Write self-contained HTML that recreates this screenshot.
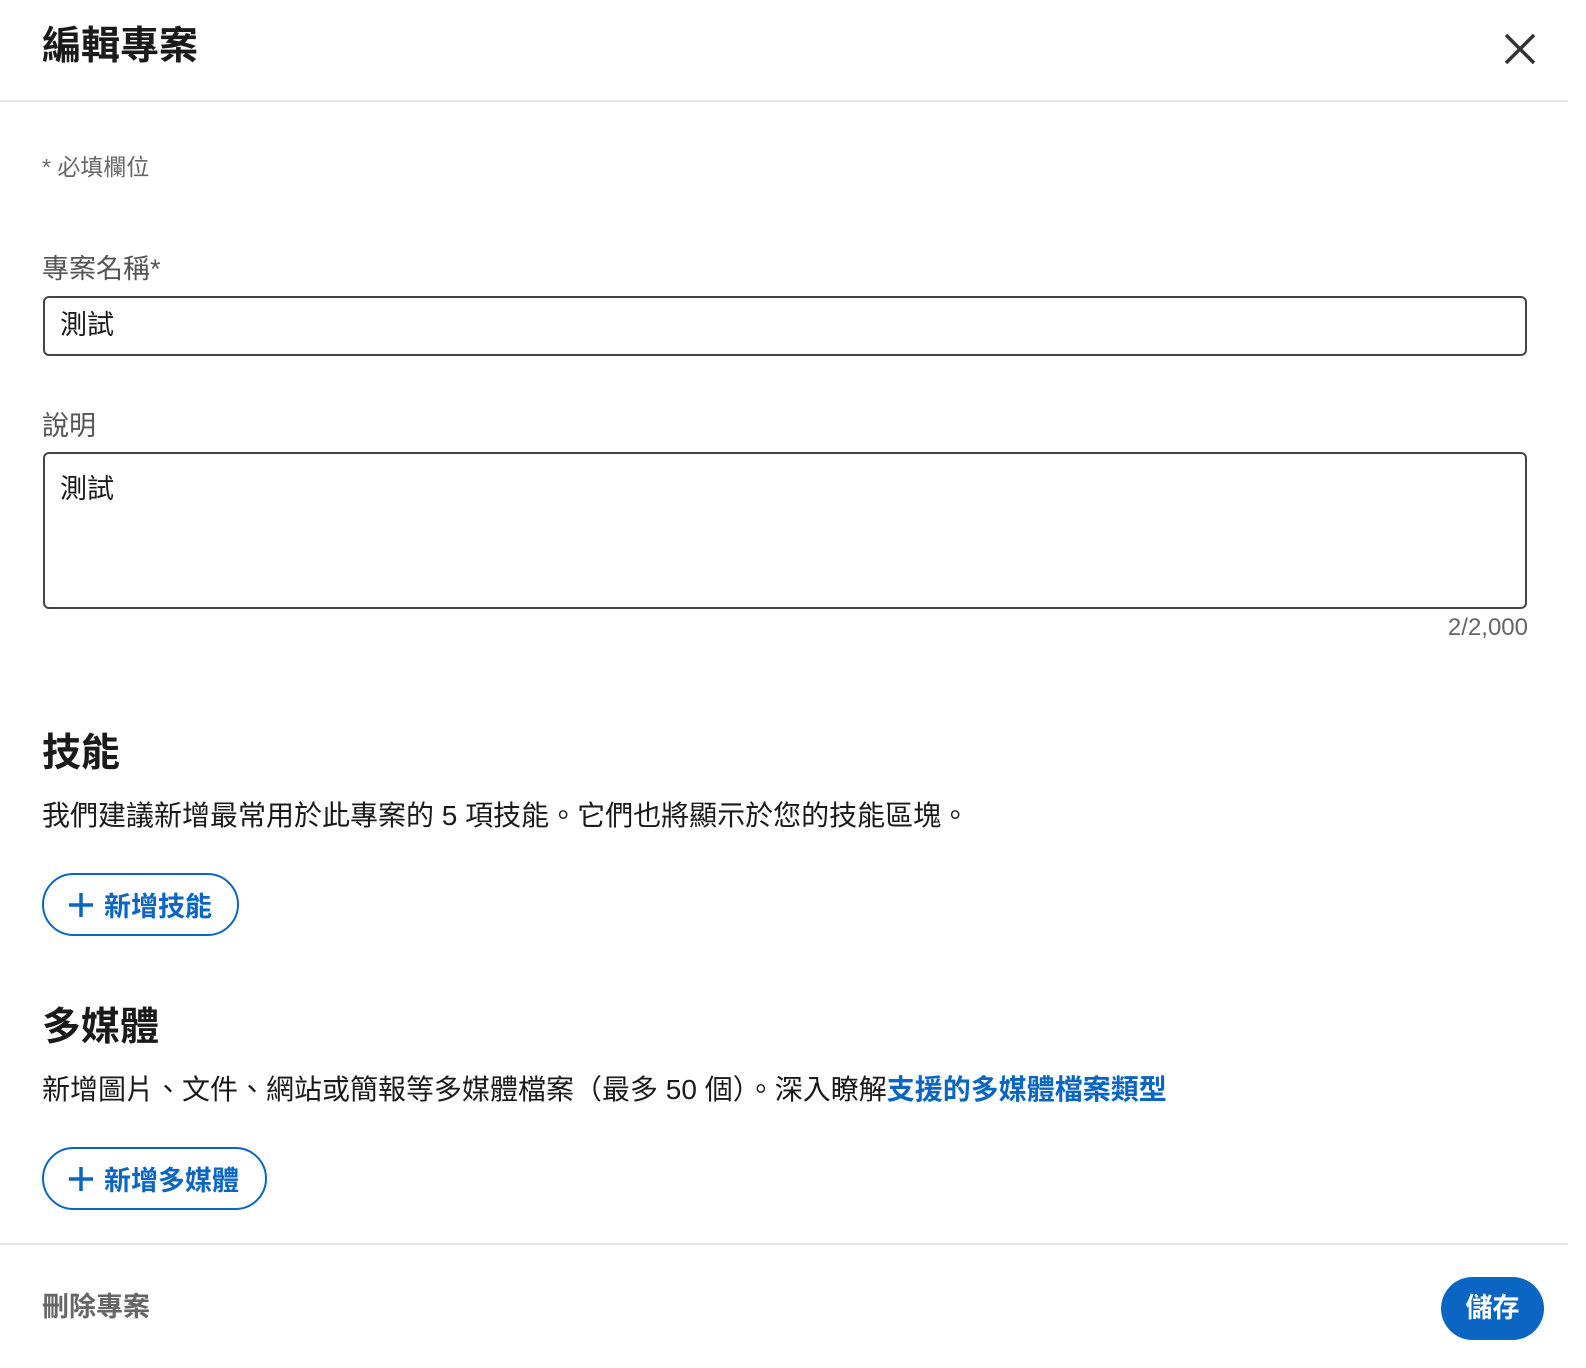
<!DOCTYPE html>
<html><head><meta charset="utf-8"><style>
*{margin:0;padding:0;box-sizing:border-box}
body{width:1586px;height:1368px;background:#fff;position:relative;overflow:hidden;font-family:"Liberation Sans","Noto Sans CJK TC",sans-serif;color:rgba(0,0,0,.9)}
.a{position:absolute;white-space:nowrap;line-height:1}
.box{position:absolute;border:2px solid #444;border-radius:6px;left:43px;width:1484px}
.btn{position:absolute;border:2px solid #0a66c2;border-radius:32px;color:#0a66c2;font-weight:bold;font-size:27px;display:flex;align-items:center;padding-left:24px}
.btn svg{margin-right:10px}
</style></head><body>
<div class="a" style="left:42px;top:27px;font-size:39px;font-weight:bold;color:#1a1a1a">編輯專案</div>
<svg class="a" style="left:1503px;top:32px" width="34" height="34" viewBox="0 0 34 34"><path d="M3 3L31 31M31 3L3 31" stroke="#333" stroke-width="3.5" fill="none"/></svg>
<div class="a" style="left:0;top:100px;width:1568px;height:2px;background:#e8e8e8"></div>
<div class="a" style="left:42px;top:156px;font-size:23px;color:#666">* 必填欄位</div>
<div class="a" style="left:42px;top:256px;font-size:27px;color:#555">專案名稱*</div>
<div class="box" style="top:296px;height:60px"></div>
<div class="a" style="left:60px;top:312px;font-size:27px;color:#1a1a1a">測試</div>
<div class="a" style="left:42px;top:413px;font-size:27px;color:#555">說明</div>
<div class="box" style="top:452px;height:157px"></div>
<div class="a" style="left:60px;top:476px;font-size:27px;color:#1a1a1a">測試</div>
<div class="a" style="right:58px;top:616px;font-size:24px;color:#666">2/2,000</div>
<div class="a" style="left:42px;top:734px;font-size:39px;font-weight:bold;color:#1a1a1a">技能</div>
<div class="a" style="left:42px;top:802px;font-size:28px;color:#1a1a1a">我們建議新增最常用於此專案的 5 項技能。它們也將顯示於您的技能區塊。</div>
<div class="btn" style="left:42px;top:873px;width:197px;height:63px"><svg width="26" height="26" viewBox="0 0 26 26"><path d="M13 1V25M1 13H25" stroke="#0a66c2" stroke-width="3.5"/></svg>新增技能</div>
<div class="a" style="left:42px;top:1008px;font-size:39px;font-weight:bold;color:#1a1a1a">多媒體</div>
<div class="a" style="left:42px;top:1076px;font-size:28px;color:#1a1a1a">新增圖片、文件、網站或簡報等多媒體檔案（最多 50 個）。深入瞭解<span style="color:#0a66c2;font-weight:bold">支援的多媒體檔案類型</span></div>
<div class="btn" style="left:42px;top:1147px;width:225px;height:63px"><svg width="26" height="26" viewBox="0 0 26 26"><path d="M13 1V25M1 13H25" stroke="#0a66c2" stroke-width="3.5"/></svg>新增多媒體</div>
<div class="a" style="left:0;top:1243px;width:1568px;height:2px;background:#e8e8e8"></div>
<div class="a" style="left:42px;top:1294px;font-size:27px;font-weight:bold;color:#666">刪除專案</div>
<div class="a" style="left:1441px;top:1277px;width:103px;height:63px;border-radius:32px;background:#0a66c2;color:#fff;font-size:27px;font-weight:bold;display:flex;align-items:center;justify-content:center">儲存</div>
</body></html>
